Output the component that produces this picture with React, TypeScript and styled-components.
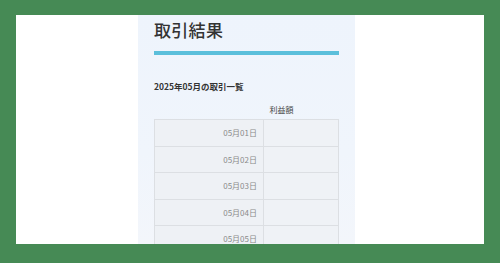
import * as React from 'react';
import styled, { createGlobalStyle } from 'styled-components';

// Monthly trade results: a header, a blue rule and a day-by-day table

const days = ['05月01日', '05月02日', '05月03日', '05月04日', '05月05日'];

const App = () => (
  <>
    <GlobalStyle />
    <Frame>
      <Screen>
        <Panel>
          <Title>取引結果</Title>
          <TitleRule />
          <SectionTitle>2025年05月の取引一覧</SectionTitle>
          <TradeTable>
            <thead>
              <tr>
                <HeadCell />
                <HeadCell>利益額</HeadCell>
              </tr>
            </thead>
            <tbody>
              {days.map((day) => (
                <tr key={day}>
                  <DateCell>{day}</DateCell>
                  <AmountCell />
                </tr>
              ))}
            </tbody>
          </TradeTable>
        </Panel>
      </Screen>
    </Frame>
  </>
);

const GlobalStyle = createGlobalStyle`
  html, body {
    margin: 0;
    padding: 0;
    background: #468a55;
    font-family: "Noto Sans CJK JP", "Noto Sans", sans-serif;
  }
`;

const Frame = styled.div`
  width: 500px;
  height: 263px;
  box-sizing: border-box;
  padding: 15px 16px 19px;
  background: #468a55;
`;

const Screen = styled.div`
  height: 100%;
  background: #ffffff;
  display: flex;
  justify-content: center;
  overflow: hidden;
  padding-right: 7px;
`;

const Panel = styled.div`
  width: 217px;
  box-sizing: border-box;
  padding: 0 16px;
  background: linear-gradient(180deg, #eef4fc 0%, #f0f5fc 60%, #f3f6fb 100%);
  display: flex;
  flex-direction: column;

  & > * {
    flex-shrink: 0;
  }
`;

const Title = styled.h1`
  margin: 0;
  font-size: 17px;
  line-height: 30px;
  font-weight: 500;
  color: #333;
  letter-spacing: 0.3px;
`;

const TitleRule = styled.div`
  margin-top: 6px;
  height: 4px;
  background: #5bbfdb;
`;

const SectionTitle = styled.h2`
  margin: 25px 0 0;
  font-size: 8.5px;
  line-height: 12px;
  font-weight: 700;
  color: #333;
`;

const TradeTable = styled.table`
  margin-top: 7px;
  width: 100%;
  border-collapse: collapse;
  table-layout: fixed;
  font-size: 8px;
`;

const HeadCell = styled.th`
  height: 20px;
  padding: 0 6px;
  text-align: left;
  font-weight: 400;
  color: #444;
  &:first-child {
    width: 97px;
  }
`;

const DateCell = styled.td`
  height: 25.5px;
  padding: 0 6px;
  text-align: right;
  color: #8a8a8a;
  background: #eef1f5;
  border: 1px solid #dcdfe3;
`;

const AmountCell = styled(DateCell)`
  background: #eff2f6;
`;

export default App;
